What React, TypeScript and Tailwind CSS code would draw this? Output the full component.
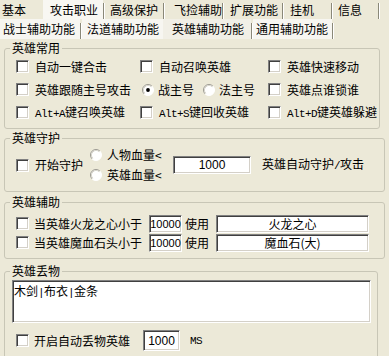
import React from "react";

const CJK = "font-['Noto_Sans_CJK_SC','Noto_Sans_CJK_JP',sans-serif]";
const MONO = "font-['Liberation_Mono',monospace] text-[11px] tracking-[-0.6px]";
const SANS = "font-['Liberation_Sans',Arial,sans-serif]";

function Check() {
  return (
    <span className="block w-[13px] h-[13px] shrink-0 bg-white border border-t-[#808080] border-l-[#808080] border-b-white border-r-white shadow-[inset_1px_1px_0_#404040,inset_-1px_-1px_0_#d4d0c8]" />
  );
}

function Radio({ on }: { on?: boolean }) {
  return (
    <svg width="12" height="12" viewBox="0 0 12 12" className="shrink-0 block">
      <circle cx="6" cy="6" r="5.5" fill="#ffffff" />
      <path d="M2.11 9.89 A5.5 5.5 0 0 1 9.89 2.11" fill="none" stroke="#9a9890" strokeWidth="1" />
      <path d="M9.89 2.11 A5.5 5.5 0 0 1 2.11 9.89" fill="none" stroke="#ffffff" strokeWidth="1" />
      <path d="M2.82 9.18 A4.5 4.5 0 0 1 9.18 2.82" fill="none" stroke="#d8d6cc" strokeWidth="1" />
      {on && <circle cx="6" cy="6" r="1.9" fill="#000000" />}
    </svg>
  );
}

function Field({ children, className }: { children?: React.ReactNode; className: string }) {
  return (
    <div
      className={`bg-white border border-t-[#808080] border-l-[#808080] border-b-white border-r-white shadow-[inset_1px_1px_0_#404040,inset_-1px_-1px_0_#d4d0c8] flex items-center justify-center shrink-0 ${className}`}
    >
      {children}
    </div>
  );
}

function Sep({ h }: { h: string }) {
  return <span className={`block w-[2px] ${h} border-l border-l-[#8a8878] border-r border-r-white shrink-0`} />;
}

function Legend({ children }: { children: React.ReactNode }) {
  return <legend className="ml-[5px] px-[2px] leading-[14px] text-[12px]">{children}</legend>;
}

export default function App() {
  return (
    <div className={`w-[389px] h-[356px] overflow-hidden bg-[#ece9d8] text-black text-[12px] leading-[14px] whitespace-nowrap ${CJK}`}>
      {/* tab row 1 */}
      <div className="flex h-[19px] items-end">
        <div className="w-[43px] h-[19px] flex items-center pl-[2px]">基本</div>
        <div className="w-[60px] h-[19px] flex items-center pl-[7px] bg-[#f8f7f2]">攻击职业</div>
        <Sep h="h-[16px]" />
        <div className="w-[58px] h-[19px] flex items-center pl-[5px]">高级保护</div>
        <Sep h="h-[16px]" />
        <div className="w-[57px] h-[19px] flex items-center pl-[9px]">飞捡辅助</div>
        <Sep h="h-[16px]" />
        <div className="w-[58px] h-[19px] flex items-center pl-[6px]">扩展功能</div>
        <Sep h="h-[16px]" />
        <div className="w-[47px] h-[19px] flex items-center pl-[6px]">挂机</div>
        <Sep h="h-[16px]" />
        <div className="w-[45px] h-[19px] flex items-center pl-[5px]">信息</div>
        <Sep h="h-[16px]" />
      </div>
      {/* tab row 2 */}
      <div className="flex h-[20px] items-end">
        <div className="w-[80px] h-[20px] flex items-center pl-[3px] bg-[#f7f6f1]">战士辅助功能</div>
        <Sep h="h-[16px]" />
        <div className="w-[81px] h-[20px] flex items-center pl-[5px] bg-[#f7f6f1]">法道辅助功能</div>
        <div className="w-[88px] h-[20px] flex items-center pl-[9px] bg-[#f1efe6]">英雄辅助功能</div>
        <Sep h="h-[16px]" />
        <div className="w-[79px] h-[20px] flex items-center pl-[3px] bg-[#f7f6f1]">通用辅助功能</div>
        <Sep h="h-[16px]" />
      </div>

      {/* panel */}
      <div className="flex flex-col">
        {/* 英雄常用 */}
        <fieldset className="mt-[2px] ml-[4px] w-[376px] border border-[#c8c6b6] rounded-[3px] p-0">
          <Legend>英雄常用</Legend>
          <div className="pl-[11px] pb-[4px] flex flex-col">
            <div className="flex items-center h-[23px]">
              <div className="w-[124px] flex items-center gap-[6px]"><Check /><span>自动一键合击</span></div>
              <div className="w-[128px] flex items-center gap-[6px]"><Check /><span>自动召唤英雄</span></div>
              <div className="flex items-center gap-[6px]"><Check /><span>英雄快速移动</span></div>
            </div>
            <div className="flex items-center h-[23px]">
              <div className="w-[126px] flex items-center gap-[6px]"><Check /><span>英雄跟随主号攻击</span></div>
              <div className="w-[61px] flex items-center gap-[4px]"><Radio on /><span>战主号</span></div>
              <div className="w-[65px] flex items-center gap-[4px]"><Radio /><span>法主号</span></div>
              <div className="flex items-center gap-[6px]"><Check /><span>英雄点谁锁谁</span></div>
            </div>
            <div className="flex items-center h-[23px]">
              <div className="w-[124px] flex items-center gap-[6px]"><Check /><span><span className={MONO}>Alt+A</span>键召唤英雄</span></div>
              <div className="w-[128px] flex items-center gap-[6px]"><Check /><span><span className={MONO}>Alt+S</span>键回收英雄</span></div>
              <div className="flex items-center gap-[6px]"><Check /><span><span className={MONO}>Alt+D</span>键英雄躲避</span></div>
            </div>
          </div>
        </fieldset>

        {/* 英雄守护 */}
        <fieldset className="mt-[2px] ml-[4px] w-[381px] border border-[#c8c6b6] rounded-[3px] p-0">
          <Legend>英雄守护</Legend>
          <div className="pl-[11px] pb-[6px] flex items-center h-[46px]">
            <div className="w-[74px] flex items-center gap-[6px]"><Check /><span>开始守护</span></div>
            <div className="w-[83px] flex flex-col">
              <div className="h-[20px] flex items-center gap-[5px]"><Radio /><span>人物血量&lt;</span></div>
              <div className="h-[20px] flex items-center gap-[5px]"><Radio /><span>英雄血量&lt;</span></div>
            </div>
            <Field className={`w-[78px] h-[18px] ${SANS} text-[12px]`}>1000</Field>
            <span className="ml-[11px]">英雄自动守护<span className={MONO}>/</span>攻击</span>
          </div>
        </fieldset>

        {/* 英雄辅助 */}
        <fieldset className="mt-[3px] ml-[4px] w-[381px] border border-[#c8c6b6] rounded-[3px] p-0">
          <Legend>英雄辅助</Legend>
          <div className="pl-[11px] pt-[5px] pb-[6px] flex flex-col">
            <div className="h-[19px] flex items-center">
              <div className="flex items-center gap-[5px]"><Check /><span>当英雄火龙之心小于</span></div>
              <Field className={`ml-[7px] w-[33px] h-[18px] ${SANS} text-[11px]`}>10000</Field>
              <span className="ml-[3px]">使用</span>
              <Field className="ml-[7px] w-[153px] h-[18px]">火龙之心</Field>
            </div>
            <div className="h-[19px] flex items-center">
              <div className="flex items-center gap-[5px]"><Check /><span>当英雄魔血石头小于</span></div>
              <Field className={`ml-[7px] w-[33px] h-[18px] ${SANS} text-[11px]`}>10000</Field>
              <span className="ml-[3px]">使用</span>
              <Field className="ml-[7px] w-[153px] h-[18px]">魔血石(大)</Field>
            </div>
          </div>
        </fieldset>

        {/* 英雄丢物 */}
        <fieldset className="mt-[5px] ml-[4px] w-[374px] border border-[#c8c6b6] rounded-[3px] p-0">
          <Legend>英雄丢物</Legend>
          <div className="pb-[10px] flex flex-col">
            <div className="mt-[2px] ml-[7px] w-[359px] h-[43px] bg-white border border-t-[#808080] border-l-[#808080] border-b-white border-r-white shadow-[inset_1px_1px_0_#404040,inset_-1px_-1px_0_#d4d0c8] pl-[1px] pt-[3px]">
              木剑<span className={MONO}>|</span>布衣<span className={MONO}>|</span>金条
            </div>
            <div className="mt-[7px] h-[21px] flex items-center pl-[11px]">
              <div className="w-[127px] flex items-center gap-[5px]"><Check /><span>开启自动丢物英雄</span></div>
              <Field className={`w-[37px] h-[21px] ${SANS} text-[12px]`}>1000</Field>
              <span className={`ml-[10px] ${MONO}`}>MS</span>
            </div>
          </div>
        </fieldset>
      </div>
    </div>
  );
}
